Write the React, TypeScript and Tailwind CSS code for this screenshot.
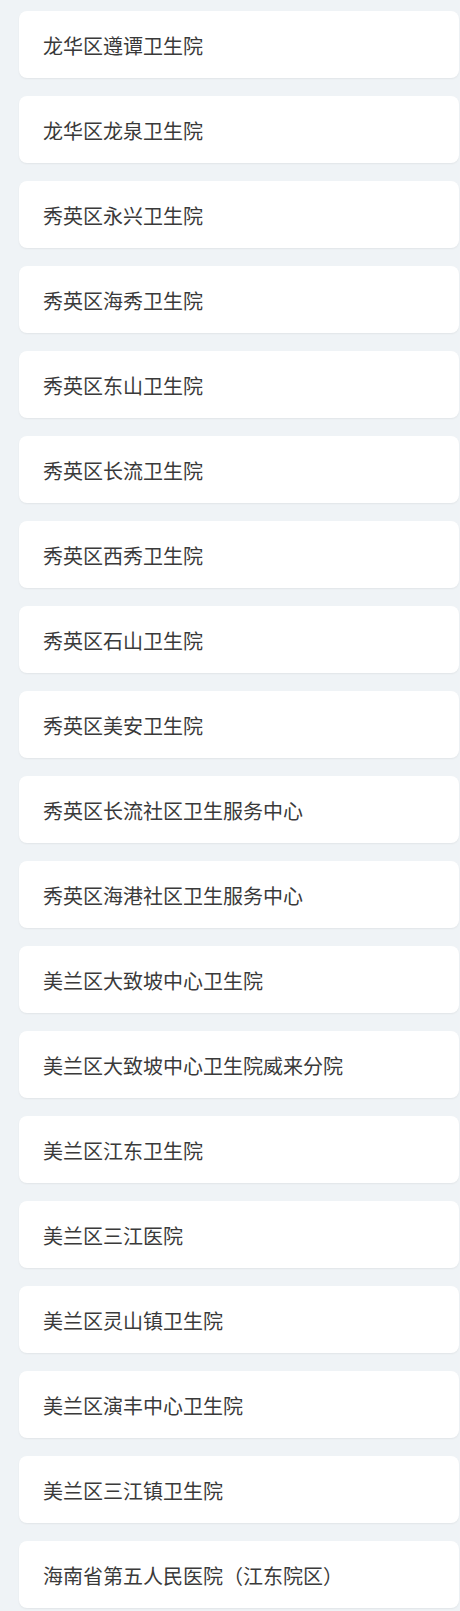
import React from "react";

const items = [
  "龙华区遵谭卫生院",
  "龙华区龙泉卫生院",
  "秀英区永兴卫生院",
  "秀英区海秀卫生院",
  "秀英区东山卫生院",
  "秀英区长流卫生院",
  "秀英区西秀卫生院",
  "秀英区石山卫生院",
  "秀英区美安卫生院",
  "秀英区长流社区卫生服务中心",
  "秀英区海港社区卫生服务中心",
  "美兰区大致坡中心卫生院",
  "美兰区大致坡中心卫生院威来分院",
  "美兰区江东卫生院",
  "美兰区三江医院",
  "美兰区灵山镇卫生院",
  "美兰区演丰中心卫生院",
  "美兰区三江镇卫生院",
  "海南省第五人民医院（江东院区）",
];

export default function App() {
  return (
    <div
      className="min-h-[1611px] w-[460px] bg-[#eff3f6] pt-[11px] pb-[3px] pl-[19px] pr-[1px]"
      style={{ fontFamily: '"Noto Sans CJK SC", "Noto Sans", sans-serif' }}
    >
      <div className="flex flex-col gap-[18px]">
        {items.map((t) => (
          <div
            key={t}
            className="flex h-[67px] items-center rounded-[8px] bg-white pl-[24px] pt-[3px] text-[20px] leading-none text-[#3a3a3a] shadow-[0_1px_2px_rgba(0,0,0,0.06)]"
          >
            {t}
          </div>
        ))}
      </div>
    </div>
  );
}
